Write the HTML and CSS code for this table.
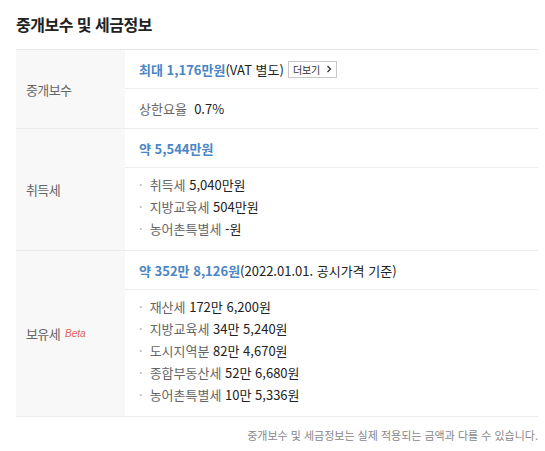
FILE: index.html
```html
<!DOCTYPE html>
<html lang="ko">
<head>
<meta charset="utf-8">
<link rel="stylesheet" href="styles.css">
</head>
<body>
<div class="wrap">
  <h2 class="title">중개보수 및 세금정보</h2>
  <div class="table">
    <div class="row">
      <div class="label">중개보수</div>
      <div class="cell">
        <div class="head"><span class="blue">최대 1,176만원</span><span class="dark">(VAT 별도)</span><span class="more">더보기 <svg width="6" height="8" viewBox="0 0 6 8"><path d="M1.5 1 L4.5 4 L1.5 7" fill="none" stroke="#333" stroke-width="1.3"/></svg></span></div>
        <div class="head"><span class="gray">상한요율</span>&nbsp;&nbsp;<span class="dark">0.7%</span></div>
      </div>
    </div>
    <div class="row">
      <div class="label">취득세</div>
      <div class="cell">
        <div class="head"><span class="blue">약 5,544만원</span></div>
        <ul class="list">
          <li><span class="gray">취득세</span> 5,040만원</li>
          <li><span class="gray">지방교육세</span> 504만원</li>
          <li><span class="gray">농어촌특별세</span> -원</li>
        </ul>
      </div>
    </div>
    <div class="row">
      <div class="label">보유세 <span class="beta">Beta</span></div>
      <div class="cell">
        <div class="head"><span class="blue">약 352만 8,126원</span><span class="dark">(2022.01.01. 공시가격 기준)</span></div>
        <ul class="list">
          <li><span class="gray">재산세</span> 172만 6,200원</li>
          <li><span class="gray">지방교육세</span> 34만 5,240원</li>
          <li><span class="gray">도시지역분</span> 82만 4,670원</li>
          <li><span class="gray">종합부동산세</span> 52만 6,680원</li>
          <li><span class="gray">농어촌특별세</span> 10만 5,336원</li>
        </ul>
      </div>
    </div>
  </div>
  <p class="note">중개보수 및 세금정보는 실제 적용되는 금액과 다를 수 있습니다.</p>
</div>
</body>
</html>
```
FILE: styles.css
```css
* { box-sizing: border-box; }
body {
  margin: 0;
  background: #fff;
  font-family: "Noto Sans CJK KR", "Noto Sans", sans-serif;
  font-size: 13px;
  color: #333;
}
.wrap {
  padding: 13px 7px 0 16px;
}
.title {
  margin: 0;
  font-size: 16px;
  font-weight: 700;
  line-height: 22px;
  color: #222;
  letter-spacing: -0.5px;
}
.table {
  margin-top: 14px;
  border-top: 1px solid #e6e6e6;
}
.row {
  display: grid;
  grid-template-columns: 109px 1fr;
  border-bottom: 1px solid #ececec;
}
.label {
  background: #f8f8f8;
  color: #666;
  padding-left: 10px;
  display: flex;
  align-items: center;
  letter-spacing: -0.6px;
}
.beta {
  font-family: "Liberation Sans", sans-serif;
  font-style: italic;
  font-size: 10px;
  color: #e06060;
  margin-left: 5px;
  letter-spacing: 0;
}
.cell {
  display: flex;
  flex-direction: column;
}
.head {
  height: 39px;
  display: flex;
  align-items: center;
  padding: 0 14px;
  border-bottom: 1px solid #eeeeee;
  letter-spacing: 0;
  white-space: pre;
}
.head:last-child { border-bottom: none; }
.blue { color: #4a86c8; font-weight: 700; }
.dark { color: #222; }
.gray { color: #666; }
.more {
  display: inline-flex;
  align-items: center;
  gap: 3px;
  margin-left: 4px;
  height: 17px;
  padding: 0 4px;
  border: 1px solid #c8c8c8;
  font-size: 10px;
  color: #333;
  letter-spacing: -0.2px;
}
.list {
  list-style: none;
  margin: 0;
  padding: 6px 14px 10px;
}
.list li {
  line-height: 22px;
  height: 22px;
  letter-spacing: 0;
  color: #222;
}
.list li::before {
  content: "·";
  color: #aaa;
  margin-right: 7px;
}
.note {
  margin: 10px 0 0;
  text-align: right;
  font-size: 11px;
  color: #888;
  letter-spacing: 0;
}
```
